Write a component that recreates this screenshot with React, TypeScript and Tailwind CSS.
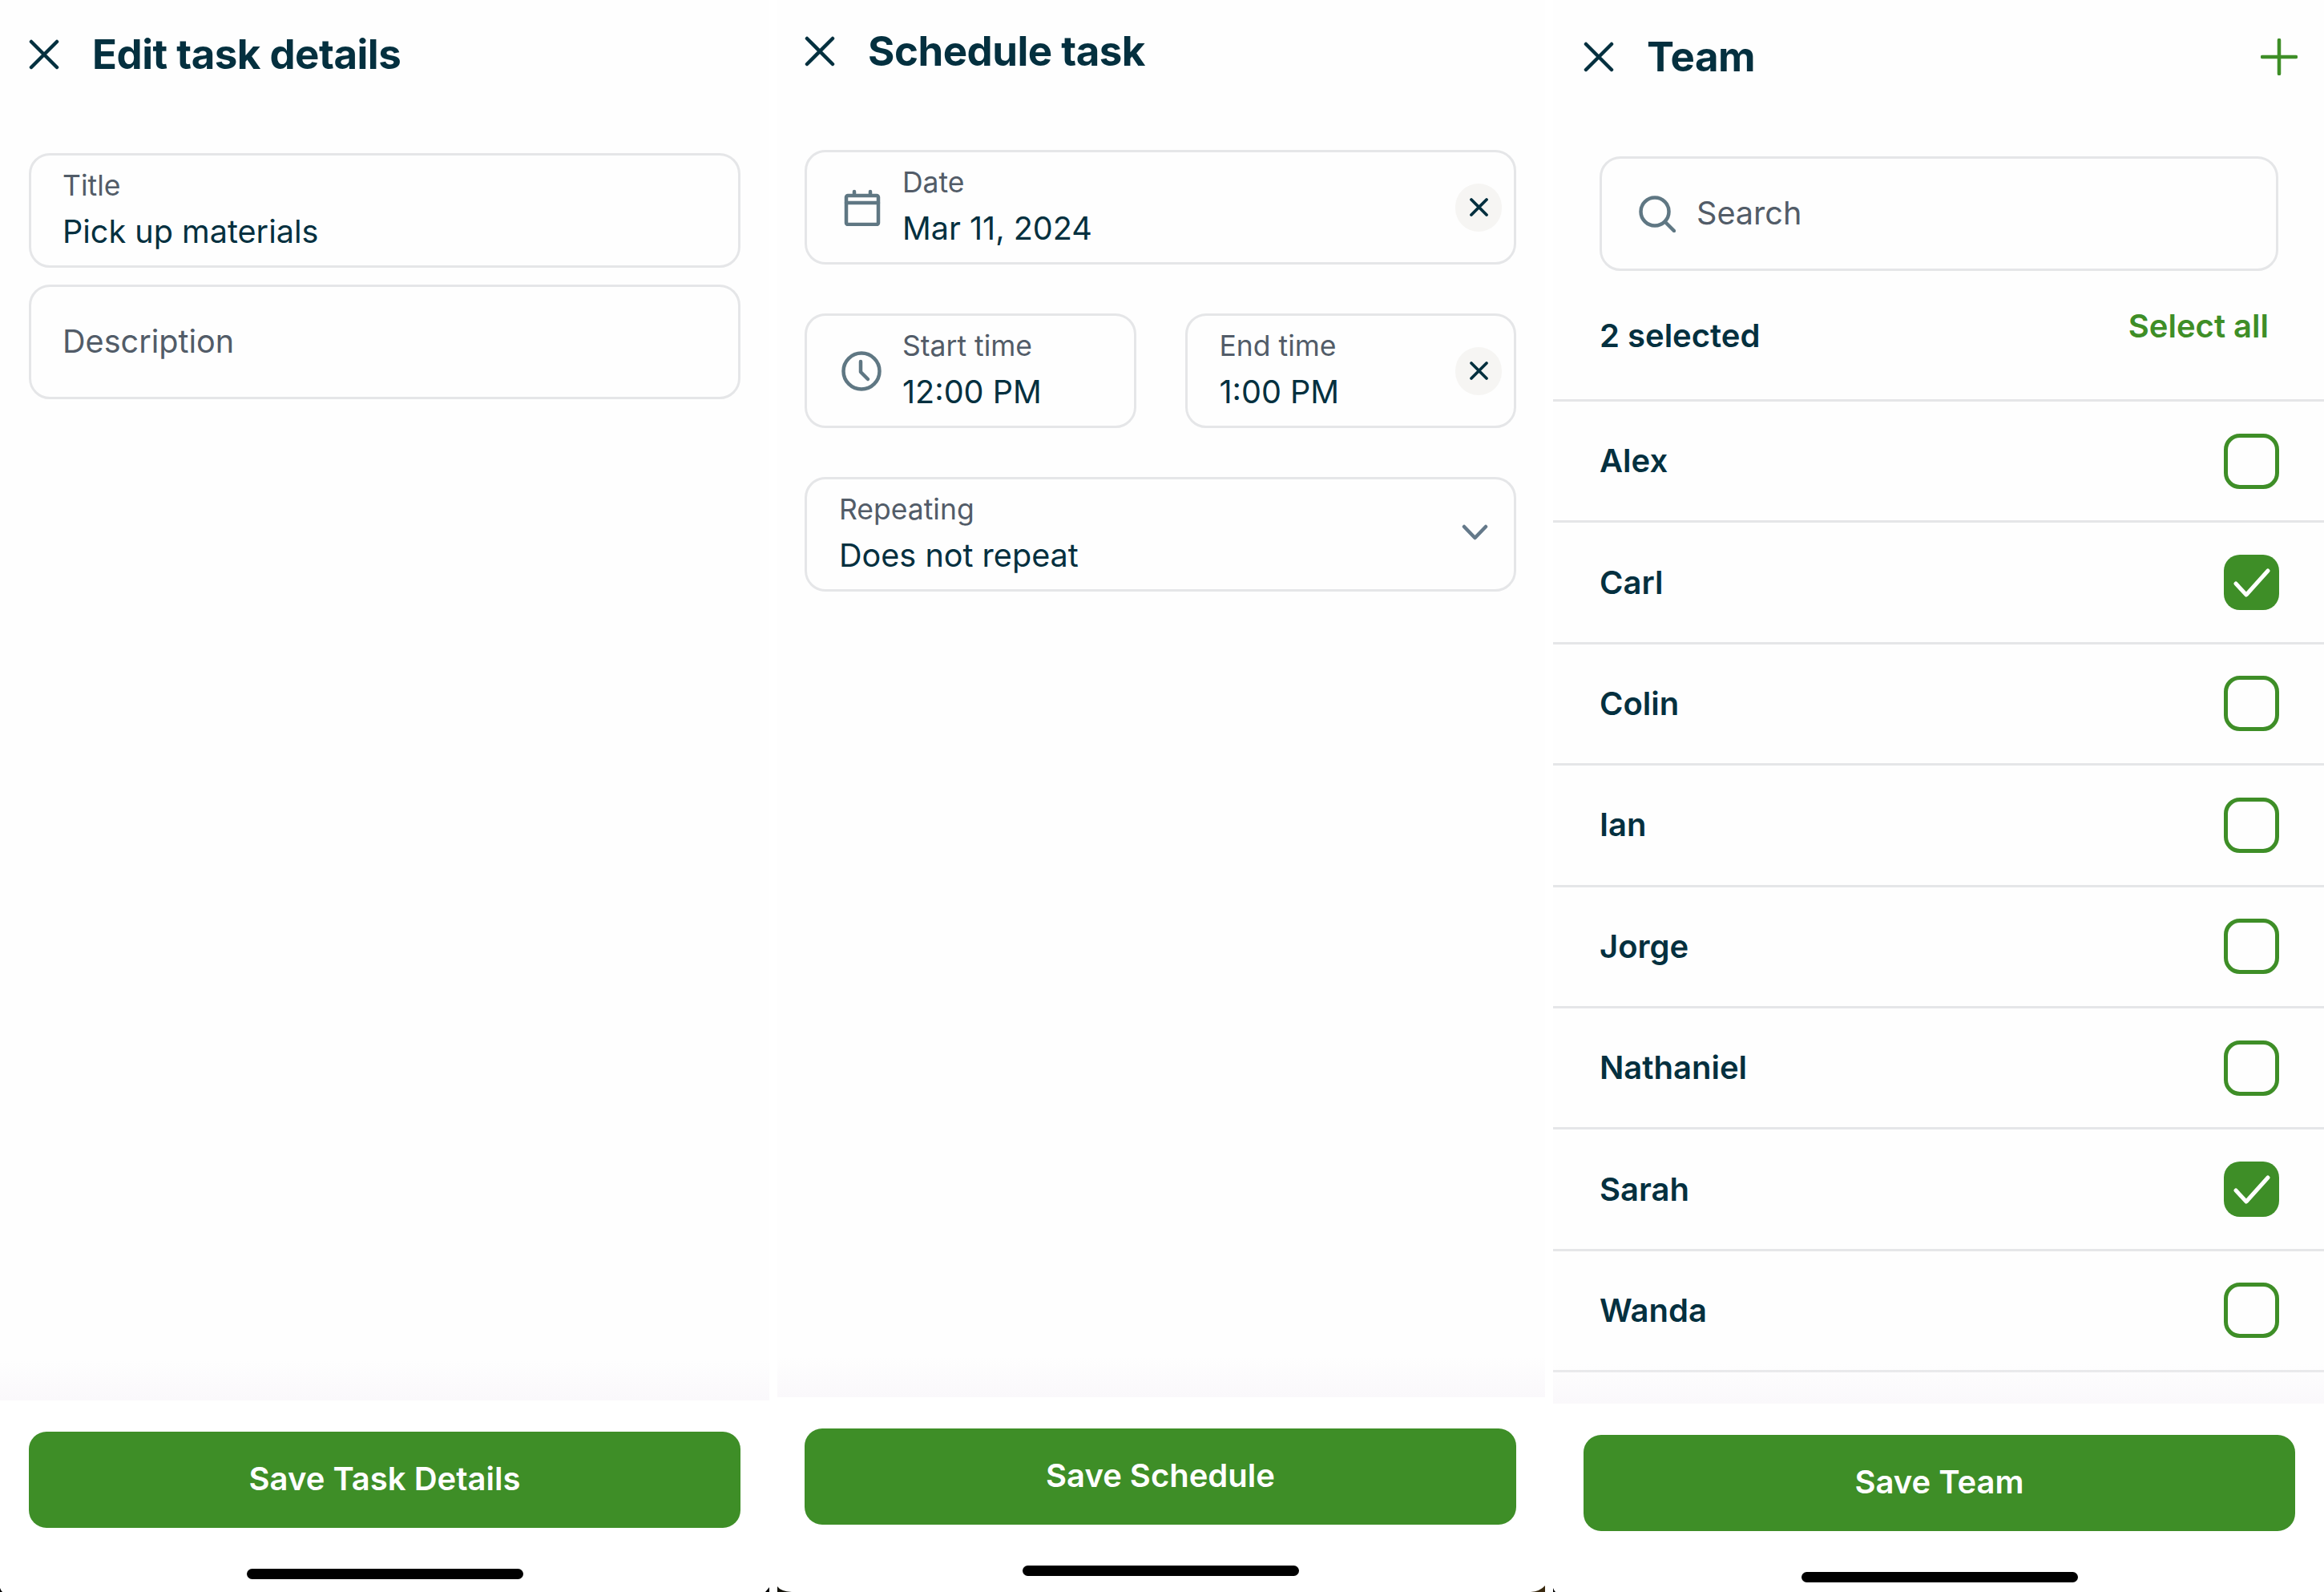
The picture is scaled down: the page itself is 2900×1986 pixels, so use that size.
import React from 'react';

const ink = 'text-[#04303f]';

const CloseIcon = ({ size = 38, stroke = 4.5 }: { size?: number; stroke?: number }) => (
  <svg width={size} height={size} viewBox={`0 0 ${size} ${size}`} fill="none" stroke="#04303f" strokeWidth={stroke} strokeLinecap="round">
    <path d={`M3 3L${size - 3} ${size - 3}M${size - 3} 3L3 ${size - 3}`} />
  </svg>
);

const ClearButton = () => (
  <div className="w-[58px] h-[60px] rounded-full bg-[#f6f5f3] flex items-center justify-center shrink-0">
    <CloseIcon size={25} stroke={3.8} />
  </div>
);

const CalendarIcon = () => (
  <svg width="46" height="46" viewBox="0 0 46 46" fill="none" stroke="#5f7783" strokeWidth="4.5" strokeLinecap="round" strokeLinejoin="round">
    <rect x="3" y="8" width="40" height="36" rx="2" />
    <path d="M3 17H43M13 3V7M33 3V7" />
  </svg>
);

const ClockIcon = () => (
  <svg width="50" height="50" viewBox="0 0 50 50" fill="none" stroke="#5f7783" strokeWidth="4.5" strokeLinecap="round" strokeLinejoin="round">
    <circle cx="25" cy="25" r="22.5" />
    <path d="M24 13V26L33 35" />
  </svg>
);

const SearchIcon = () => (
  <svg width="46" height="46" viewBox="0 0 46 46" fill="none" stroke="#5f7783" strokeWidth="4.5" strokeLinecap="round">
    <circle cx="20" cy="20" r="17.5" />
    <path d="M33 33L44 44" />
  </svg>
);

const Field = ({ label, value, className = '' }: { label: string; value: string; className?: string }) => (
  <div className={`min-w-0 ${className}`}>
    <p className="text-[35.500px] leading-[44px] text-[#525c68]">{label}</p>
    <p className={`text-[39.600px] leading-[52px] mt-[9px] ${ink}`}>{value}</p>
  </div>
);

const Box = ({ className = '', children }: { className?: string; children: React.ReactNode }) => (
  <div className={`h-[143px] border-[3px] border-[#e5e6e8] rounded-[26px] flex items-center ${className}`}>{children}</div>
);

// little bits of the phone's black corner that show at the bottom of each capture
const Corner = ({ className, d, color = '#000' }: { className: string; d: string; color?: string }) => (
  <svg width="20" height="8" viewBox="0 0 20 8" className={`absolute bottom-0 ${className}`}>
    <path d={d} fill={color} />
  </svg>
);

const Panel = ({ title, cta, topClass, bottomClass, gapClass, padClass, action, children, className, corners }: {
  title: string;
  cta: string;
  topClass: string;
  bottomClass: string;
  gapClass: string;
  padClass: string;
  action?: React.ReactNode;
  children: React.ReactNode;
  className: string;
  corners?: React.ReactNode;
}) => (
  <section className={`relative h-full flex flex-col bg-[#fefefe] ${className}`}>
    <header className={`h-[70px] flex items-center justify-between ${topClass} ${padClass} box-content ${gapClass}`}>
      <div className="flex items-center">
        <CloseIcon />
        <h2 className={`ml-[41px] text-[51px] leading-[70px] font-bold tracking-[-0.5px] ${ink}`}>{title}</h2>
      </div>
      {action}
    </header>
    <div className="flex-1 min-h-0 flex flex-col">{children}</div>
    <footer className={`relative bg-white ${padClass} ${bottomClass}`}>
      <div className="absolute left-0 right-0 -top-[50px] h-[50px] bg-gradient-to-b from-[#faf8fb]/0 to-[#faf8fb]" />
      <button className="mt-[39px] w-full h-[120px] pb-[3px] rounded-[22px] bg-[#3e8e27] text-white text-[40px] font-semibold">{cta}</button>
      <div className="mt-[51px] mx-auto w-[345px] h-[13px] rounded-full bg-black" />
    </footer>
    {corners}
  </section>
);

const people = [
  { name: 'Alex', on: false },
  { name: 'Carl', on: true },
  { name: 'Colin', on: false },
  { name: 'Ian', on: false },
  { name: 'Jorge', on: false },
  { name: 'Nathaniel', on: false },
  { name: 'Sarah', on: true },
  { name: 'Wanda', on: false },
];

const Checkbox = ({ on }: { on: boolean }) =>
  on ? (
    <div className="w-[69px] h-[69px] rounded-[20px] bg-[#3e8e27] flex items-center justify-center">
      <svg width="46" height="38" viewBox="0 0 46 38" fill="none" stroke="#fff" strokeWidth="5" strokeLinecap="round" strokeLinejoin="round">
        <path d="M3 20L16 34L43 4" />
      </svg>
    </div>
  ) : (
    <div className="w-[69px] h-[69px] rounded-[20px] border-[5px] border-[#3e8e27]" />
  );

export default function App() {
  return (
    <div className="w-[2900px] h-[1986px] bg-white flex justify-between overflow-hidden font-['Inter',sans-serif]">
      <Panel
        title="Edit task details"
        cta="Save Task Details"
        className="w-[960px]"
        topClass="pt-[33px]"
        gapClass="mb-[88px]"
        padClass="px-[36px]"
        bottomClass="pb-[16px]"
        corners={
          <>
            <Corner className="left-0" d="M0 3Q1 6 3 8H0Z" />
            <Corner className="right-0" d="M20 2L15 8H20Z" />
          </>
        }
      >
        <div className="px-[36px] flex flex-col gap-[21px]">
          <Box className="px-[39px]">
            <Field label="Title" value="Pick up materials" />
          </Box>
          <Box className="px-[39px]">
            <span className="text-[39.600px] text-[#525c68]">Description</span>
          </Box>
        </div>
      </Panel>

      <Panel
        title="Schedule task"
        cta="Save Schedule"
        className="w-[958px]"
        topClass="pt-[29px]"
        gapClass="mb-[88px]"
        padClass="pl-[34px] pr-[36px]"
        bottomClass="pb-[20px]"
        corners={
          <>
            <Corner className="left-0" d="M0 1Q4 7 18 8H0Z" color="#14130a" />
            <Corner className="right-0" d="M20 0Q14 7 2 8H20Z" color="#3a2a10" />
          </>
        }
      >
        <div className="pl-[34px] pr-[36px] flex flex-col gap-[61px]">
          <Box className="pl-[46px] pr-[15px]">
            <CalendarIcon />
            <Field label="Date" value="Mar 11, 2024" className="ml-[27px] flex-1" />
            <ClearButton />
          </Box>
          <div className="grid grid-cols-2 gap-[61px]">
            <Box className="pl-[43px] pr-[15px]">
              <ClockIcon />
              <Field label="Start time" value="12:00 PM" className="ml-[26px] flex-1" />
            </Box>
            <Box className="pl-[40px] pr-[15px]">
              <Field label="End time" value="1:00 PM" className="flex-1" />
              <ClearButton />
            </Box>
          </div>
          <Box className="pl-[40px] pr-[32px]">
            <Field label="Repeating" value="Does not repeat" className="flex-1" />
            <svg width="33" height="20" viewBox="0 0 33 20" fill="none" stroke="#64798a" strokeWidth="4.5" strokeLinecap="round" strokeLinejoin="round" className="mb-[6px]">
              <path d="M3 3L16.500 17L30 3" />
            </svg>
          </Box>
        </div>
      </Panel>

      <Panel
        title="Team"
        cta="Save Team"
        className="w-[962px]"
        topClass="pt-[36px]"
        gapClass="mb-[89px]"
        padClass="pl-[38px] pr-[36px]"
        bottomClass="pb-[12px]"
        action={
          <svg width="46" height="46" viewBox="0 0 46 46" fill="none" stroke="#3e8e27" strokeWidth="4.5" strokeLinecap="round" className="-mr-[3px]">
            <path d="M23 2V44M2 23H44" />
          </svg>
        }
        corners={<Corner className="left-0" d="M0 3Q1 6 3 8H0Z" />}
      >
        <div className="pl-[58px] pr-[57px]">
          <Box className="pl-[46px]">
            <SearchIcon />
            <span className="ml-[26px] text-[39.600px] text-[#525c68]">Search</span>
          </Box>
          <div className="h-[160px] flex justify-between">
            <span className={`mt-[51px] text-[40px] leading-[60px] font-semibold ${ink}`}>2 selected</span>
            <span className="mt-[39px] mr-[12px] text-[40px] leading-[60px] font-semibold text-[#3e8e27]">Select all</span>
          </div>
        </div>
        <ul className="border-t-[3px] border-[#e5e6e8]">
          {people.map((p) => (
            <li key={p.name} className="h-[151.400px] border-b-[3px] border-[#e5e6e8] pl-[58px] pr-[56px] flex items-center justify-between">
              <span className={`text-[40px] font-semibold ${ink}`}>{p.name}</span>
              <Checkbox on={p.on} />
            </li>
          ))}
        </ul>
      </Panel>
    </div>
  );
}
